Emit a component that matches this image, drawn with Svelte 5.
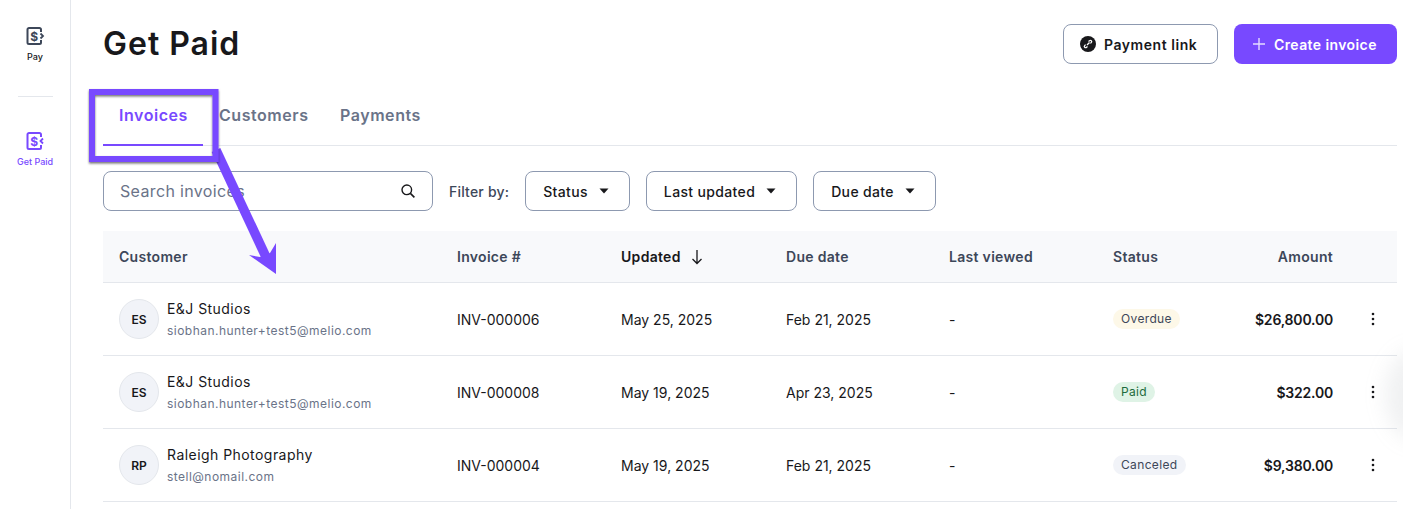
<script>
  const rows = [
    { initials: "ES", name: "E&J Studios", email: "siobhan.hunter+test5@melio.com", inv: "INV-000006", updated: "May 25, 2025", due: "Feb 21, 2025", status: "Overdue", kind: "overdue", amount: "$26,800.00" },
    { initials: "ES", name: "E&J Studios", email: "siobhan.hunter+test5@melio.com", inv: "INV-000008", updated: "May 19, 2025", due: "Apr 23, 2025", status: "Paid", kind: "paid", amount: "$322.00" },
    { initials: "RP", name: "Raleigh Photography", email: "stell@nomail.com", inv: "INV-000004", updated: "May 19, 2025", due: "Feb 21, 2025", status: "Canceled", kind: "canceled", amount: "$9,380.00" }
  ];
  const filters = ["Status", "Last updated", "Due date"];
</script>

<div class="page">
  <aside class="side">
    <div class="nav-item">
      <svg width="20" height="20" viewBox="0 0 20 20" fill="none">
        <path d="M16 6V3.5C16 2.7 15.3 2 14.5 2H4C3.2 2 2.5 2.7 2.5 3.5V16.5C2.5 17.3 3.2 18 4 18H14.5C15.3 18 16 17.3 16 16.500V14" stroke="#3d4759" stroke-width="2"/>
        <path d="M15.500 7.500L18 10L15.500 12.500" stroke="#3d4759" stroke-width="1.800"/>
        <text x="9.200" y="14.500" text-anchor="middle" class="dollar" fill="#3d4759">$</text>
      </svg>
      <span>Pay</span>
    </div>
    <div class="side-line"></div>
    <div class="nav-item active">
      <svg width="20" height="20" viewBox="0 0 20 20" fill="none">
        <path d="M16 6V3.5C16 2.7 15.3 2 14.5 2H4C3.2 2 2.5 2.7 2.5 3.5V16.5C2.5 17.3 3.2 18 4 18H14.5C15.3 18 16 17.3 16 16.500V14" stroke="#7849ff" stroke-width="2"/>
        <path d="M18 7.500L15.500 10L18 12.500" stroke="#7849ff" stroke-width="1.800"/>
        <text x="9.200" y="14.500" text-anchor="middle" class="dollar" fill="#7849ff">$</text>
      </svg>
      <span>Get Paid</span>
    </div>
  </aside>

  <main class="main">
    <header class="top">
      <h1>Get Paid</h1>
      <div class="actions">
        <button class="btn outline">
          <svg width="16" height="16" viewBox="0 0 16 16">
            <circle cx="8" cy="8" r="8" fill="#18181b"/>
            <path d="M7 9L9.500 6.500M8.500 5.500L9.500 4.700C10.200 4.200 11 4.300 11.400 4.800C11.800 5.300 11.800 6 11.200 6.600L10.400 7.400M5.600 8.600L4.800 9.400C4.200 10 4.200 10.800 4.700 11.300C5.200 11.800 6 11.800 6.600 11.200L7.500 10.400" stroke="#fff" stroke-width="1.300" fill="none"/>
          </svg>
          Payment link
        </button>
        <button class="btn primary">
          <svg width="14" height="14" viewBox="0 0 14 14"><path d="M7 1V13M1 7H13" stroke="#e4dbff" stroke-width="1.400"/></svg>
          Create invoice
        </button>
      </div>
    </header>

    <nav class="tabs">
      <div class="tab current">Invoices</div>
      <div class="tab">Customers</div>
      <div class="tab">Payments</div>
    </nav>

    <div class="toolbar">
      <div class="search">
        <span class="placeholder">Search invoices</span>
        <svg width="16" height="16" viewBox="0 0 16 16" fill="none">
          <circle cx="6.800" cy="6.800" r="4.800" stroke="#18181b" stroke-width="1.400"/>
          <path d="M10.400 10.400L14.400 14.400" stroke="#18181b" stroke-width="1.600"/>
        </svg>
      </div>
      <span class="filter-label">Filter by:</span>
      {#each filters as f}
        <button class="filter">
          {f}
          <svg width="10" height="6" viewBox="0 0 10 6"><path d="M0.500 0.500H9.500L5 5.500Z" fill="#18181b"/></svg>
        </button>
      {/each}
    </div>

    <div class="thead row-grid">
      <div>Customer</div>
      <div>Invoice #</div>
      <div class="sorted">
        Updated
        <svg width="14" height="16" viewBox="0 0 14 16" fill="none"><path d="M7 1V14.500M2.500 10L7 14.500L11.500 10" stroke="#18181b" stroke-width="1.300"/></svg>
      </div>
      <div>Due date</div>
      <div>Last viewed</div>
      <div>Status</div>
      <div class="right">Amount</div>
      <div></div>
    </div>

    {#each rows as r}
      <div class="row row-grid">
        <div class="customer">
          <div class="avatar">{r.initials}</div>
          <div class="who">
            <div class="name">{r.name}</div>
            <div class="email">{r.email}</div>
          </div>
        </div>
        <div>{r.inv}</div>
        <div>{r.updated}</div>
        <div>{r.due}</div>
        <div>-</div>
        <div class="pill-cell"><span class="pill {r.kind}">{r.status}</span></div>
        <div class="right amount">{r.amount}</div>
        <div class="more">
          <svg width="4" height="14" viewBox="0 0 4 14"><circle cx="2" cy="2" r="1.300" fill="#18181b"/><circle cx="2" cy="7" r="1.300" fill="#18181b"/><circle cx="2" cy="12" r="1.300" fill="#18181b"/></svg>
        </div>
      </div>
    {/each}
  </main>

  <!-- annotation drawn over the screenshot -->
  <svg class="markup" width="1403" height="509" viewBox="0 0 1403 509" fill="none">
    <defs>
      <filter id="sh" x="-10%" y="-10%" width="120%" height="120%">
        <feDropShadow dx="0" dy="1.500" stdDeviation="1" flood-color="#000" flood-opacity="0.550"/>
      </filter>
    </defs>
    <path d="M216 150L266 257" stroke="#7849ff" stroke-width="9.500"/>
    <rect x="92" y="92" width="123.500" height="67" stroke="#7849ff" stroke-width="6" filter="url(#sh)"/>
    <path d="M276 274L249 255L260 257L270 253L276 243Z" fill="#7849ff"/>
  </svg>
  <div class="glow"></div>
</div>

<style>
  :global(body) {
    margin: 0;
    background: #fff;
  }
  .page {
    position: relative;
    display: flex;
    width: 1403px;
    height: 509px;
    overflow: hidden;
    font-family: Inter, "Open Sans", sans-serif;
    color: #18181b;
  }
  .side {
    width: 70px;
    height: 509px;
    border-right: 1px solid #e4e7ec;
    display: flex;
    flex-direction: column;
    align-items: center;
    padding-top: 26px;
    box-sizing: content-box;
    flex: none;
  }
  .nav-item {
    display: flex;
    flex-direction: column;
    align-items: center;
    gap: 5px;
    font-size: 9px;
    font-weight: 500;
    line-height: 12px;
    color: #18181b;
  }
  .nav-item.active {
    color: #7849ff;
  }
  .dollar {
    font-size: 12px;
    font-weight: 700;
  }
  .side-line {
    width: 35px;
    height: 1px;
    background: #e4e7ec;
    margin: 33px 0 34px;
  }
  .main {
    width: 1294px;
    margin-left: 32px;
    flex: none;
    font-size: 14px;
  }
  .top {
    display: flex;
    justify-content: space-between;
    align-items: flex-start;
    padding-top: 24px;
    height: 60px;
    box-sizing: content-box;
  }
  h1 {
    margin: 0;
    font-size: 32px;
    line-height: 40px;
    font-weight: 600;
    color: #18181b;
    letter-spacing: 1px;
  }
  .actions {
    display: flex;
    gap: 16px;
  }
  .btn {
    height: 40px;
    border-radius: 8px;
    display: flex;
    align-items: center;
    gap: 8px;
    font: 600 14px Inter, sans-serif;
    letter-spacing: 0.55px;
    box-sizing: border-box;
  }
  .outline {
    width: 155px;
    padding: 0 0 0 16px;
    background: #fff;
    border: 1px solid #8d99b0;
    color: #18181b;
  }
  .primary {
    width: 163px;
    padding: 0 0 0 18px;
    background: #7849ff;
    border: 0;
    color: #fff;
    letter-spacing: 0.4px;
  }
  .tabs {
    display: grid;
    grid-template-columns: 100px 121px auto;
    height: 62px;
    border-bottom: 1px solid #e4e7ec;
    box-sizing: border-box;
  }
  .tab {
    padding: 19px 16px 0;
    font-size: 16px;
    font-weight: 600;
    line-height: 24px;
    letter-spacing: 0.55px;
    color: #6a7388;
    box-sizing: border-box;
    height: 62px;
    white-space: nowrap;
  }
  .tab.current {
    color: #7849ff;
    border-bottom: 2px solid #7849ff;
  }
  .toolbar {
    display: flex;
    align-items: center;
    margin-top: 25px;
    height: 40px;
  }
  .search {
    width: 330px;
    height: 40px;
    border: 1px solid #8d99b0;
    border-radius: 8px;
    display: flex;
    align-items: center;
    justify-content: space-between;
    padding: 0 16px;
    box-sizing: border-box;
  }
  .placeholder {
    font-size: 16px;
    letter-spacing: 0.35px;
    color: #6a7388;
  }
  .filter-label {
    margin: 0 16px;
    font-size: 14px;
    font-weight: 500;
    letter-spacing: 0.2px;
    color: #3d4759;
  }
  .filter {
    height: 40px;
    margin-right: 16px;
    padding: 0 20px 0 17px;
    background: #fff;
    border: 1px solid #8d99b0;
    border-radius: 8px;
    display: flex;
    align-items: center;
    gap: 11px;
    font: 500 14px Inter, sans-serif;
    letter-spacing: 0.35px;
    color: #18181b;
    box-sizing: border-box;
  }
  .row-grid {
    display: grid;
    grid-template-columns: 338px 164px 165px 163px 164px 120px 100px 64px;
    padding-left: 16px;
    align-items: center;
    box-sizing: border-box;
  }
  .thead {
    margin-top: 20px;
    height: 52px;
    background: #f8f9fb;
    border-bottom: 1px solid #e4e7ec;
    font-weight: 600;
    letter-spacing: 0.3px;
    color: #3d4759;
  }
  .sorted {
    display: flex;
    align-items: center;
    gap: 9px;
    color: #18181b;
  }
  .right {
    text-align: right;
  }
  .row {
    height: 73px;
    border-bottom: 1px solid #e4e7ec;
    color: #18181b;
  }
  .customer {
    display: flex;
    align-items: center;
    gap: 8px;
  }
  .avatar {
    width: 40px;
    height: 40px;
    border-radius: 50%;
    background: #f1f3f8;
    border: 1px solid #e4e7ec;
    display: flex;
    align-items: center;
    justify-content: center;
    font-size: 12px;
    font-weight: 600;
    box-sizing: border-box;
  }
  .name {
    font-size: 14px;
    line-height: 20px;
    letter-spacing: 0.45px;
  }
  .email {
    font-size: 12px;
    line-height: 16px;
    margin-top: 4px;
    letter-spacing: 0.47px;
    color: #6a7388;
  }
  .pill-cell {
    display: flex;
  }
  .pill {
    font-size: 12px;
    line-height: 20px;
    padding: 0 8px;
    border-radius: 10px;
    letter-spacing: 0.35px;
    color: #3d4759;
  }
  .overdue {
    background: #fdf8e8;
  }
  .paid {
    background: #dff3e6;
    color: #1d6b3c;
  }
  .canceled {
    background: #f1f3f8;
  }
  .amount {
    font-weight: 600;
    letter-spacing: -0.2px;
  }
  .more {
    display: flex;
    justify-content: flex-end;
    padding-right: 22px;
  }
  .markup {
    position: absolute;
    left: 0;
    top: 0;
    pointer-events: none;
  }
  .glow {
    position: absolute;
    left: 1385px;
    top: 350px;
    width: 60px;
    height: 90px;
    border-radius: 50%;
    background: rgba(150, 155, 165, 0.14);
    filter: blur(10px);
    pointer-events: none;
  }
</style>
